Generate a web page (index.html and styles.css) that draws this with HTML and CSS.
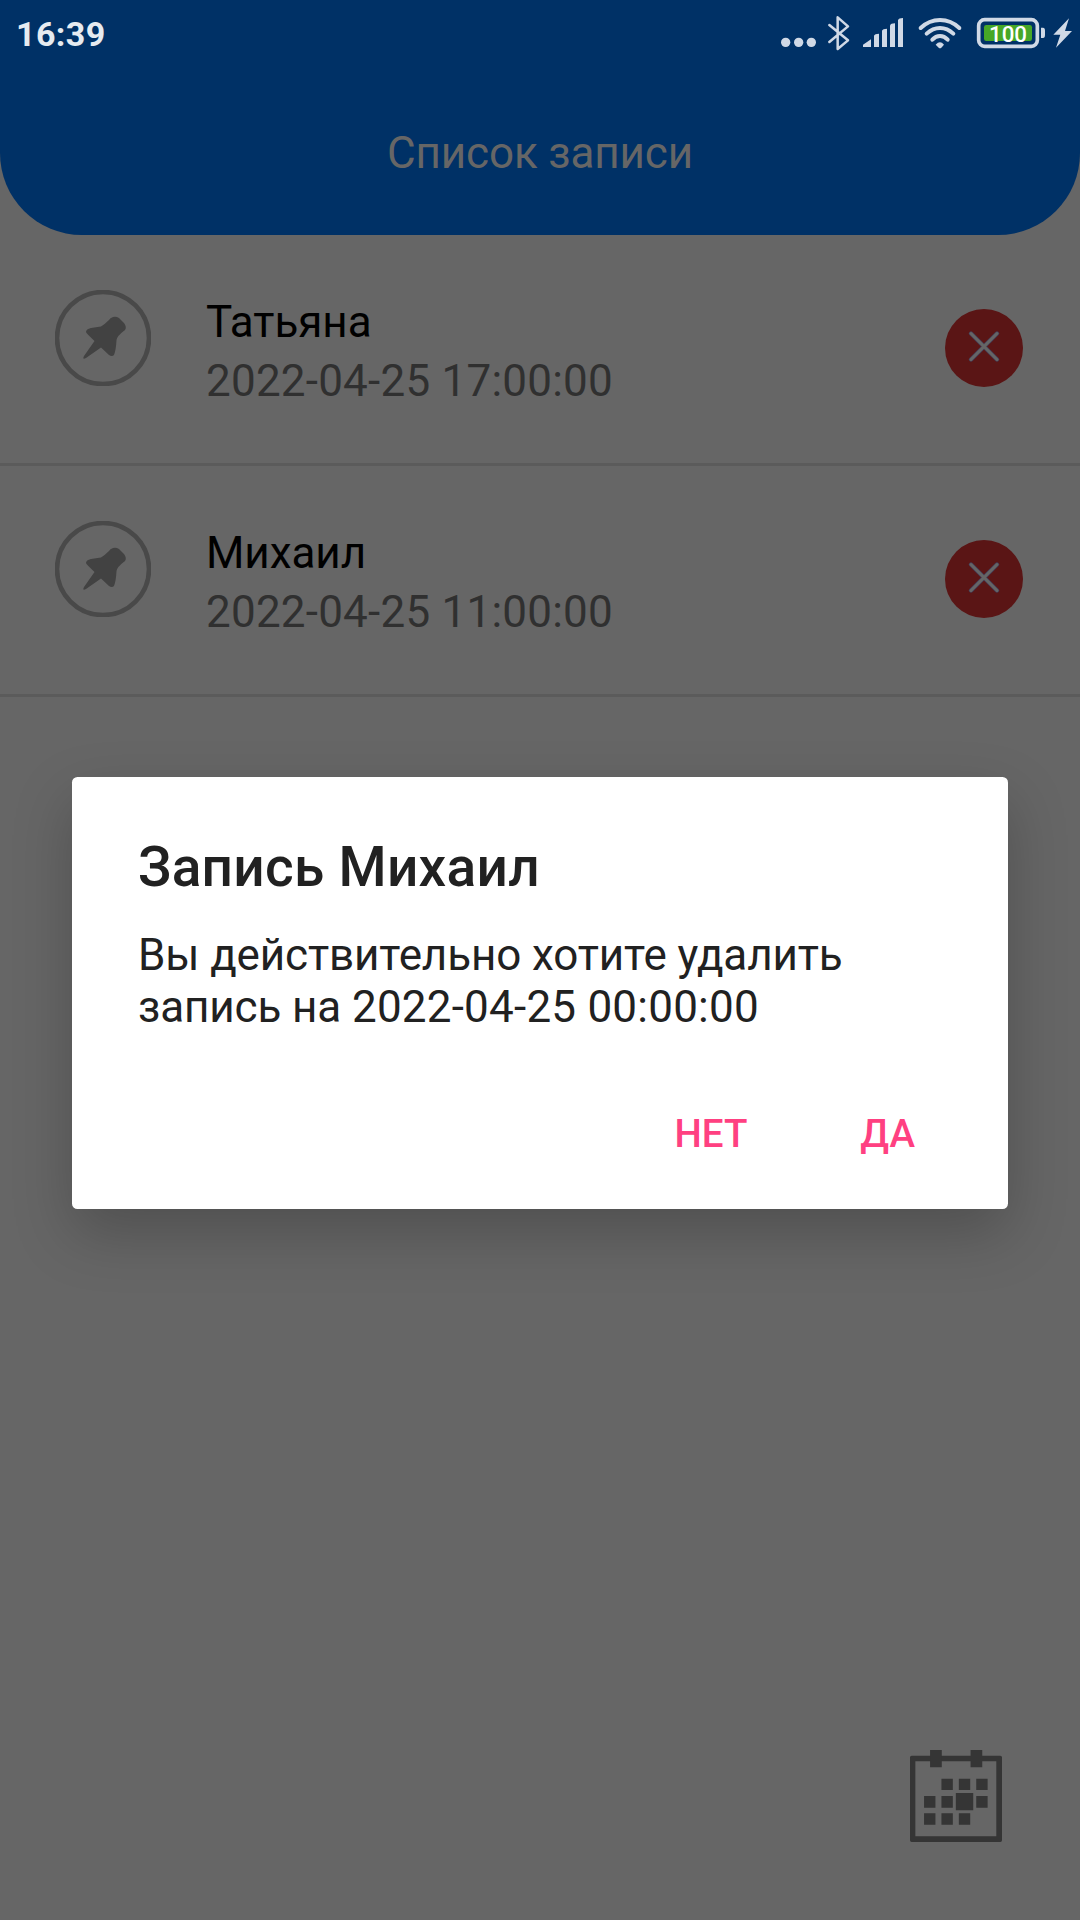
FILE: index.html
```html
<!DOCTYPE html>
<html lang="ru">
<head>
<meta charset="utf-8">
<title>Список записи</title>
<link rel="stylesheet" href="styles.css">
</head>
<body>
<div class="screen">
  <header class="header">
    <div class="status">
      <span class="clock">16:39</span>
      <svg class="status-icons" width="320" height="80" viewBox="0 0 960 240" fill="#d0d9e6">
        <circle cx="77" cy="127" r="14"/><circle cx="116" cy="127" r="14"/><circle cx="154" cy="127" r="14"/>
        <path d="M208 75L264 121L233 147V52L264 79L208 126" fill="none" stroke="#d0d9e6" stroke-width="7.500" stroke-linejoin="round" stroke-linecap="round"/>
        <path d="M309 141V134L333 118V141ZM342 141V107Q344 101 357 101V141ZM366 141V92Q368 86 381 86V141ZM390 141V77Q392 70 405 70V141ZM414 141V61Q416 54 429 54V141Z"/>
        <g fill="none" stroke="#d0d9e6" stroke-width="12" stroke-linecap="round">
          <path d="M482 84Q507 60 540 60T598 84"/><path d="M500 101Q518 84 540 84T580 101"/><path d="M517 119Q527 108 540 108T563 119"/>
        </g>
        <path d="M527 134Q540 120 552 134L544 143Q540 146 536 143Z"/>
        <rect x="656" y="59" width="176" height="80" rx="18" fill="none" stroke="#d0d9e6" stroke-width="11"/>
        <rect x="672" y="75" width="144" height="48" rx="7" fill="#47a727"/>
        <path d="M843 83H849Q855 83 855 92V105Q855 114 849 114H843Z"/>
        <path d="M927 55L880 104H901L888 143L936 93H915Z"/>
        <text class="charge" x="744" y="125" text-anchor="middle">100</text>
      </svg>
    </div>
    <h1 class="title">Список записи</h1>
  </header>

  <main class="list">
    <article class="row">
      <svg class="pin" width="96" height="96" viewBox="0 0 96 96">
        <circle cx="48" cy="48" r="46" fill="none" stroke="#494949" stroke-width="4.600"/>
        <path d="M58 27Q61 26 64 28L69 33Q72 37 70 40Q62 46 61.500 50Q61 60 59 65Q57 67 54 65L46 57.500L31 68Q27 70 29 66L39.500 51Q31 43 31 42Q31 39 36 38L46 36.500Q50 34 54 30Q55 28 58 27Z" fill="#424242"/>
      </svg>
      <div class="info">
        <div class="name">Татьяна</div>
        <div class="date">2022-04-25 17:00:00</div>
      </div>
      <button class="delete" aria-label="Удалить">
        <svg width="78" height="78" viewBox="0 0 78 78">
          <path class="edge" d="M26 24.500L52 50.500M52 24.500L26 50.500"/>
          <path d="M26 24.500L52 50.500M52 24.500L26 50.500"/>
        </svg>
      </button>
    </article>
    <article class="row">
      <svg class="pin" width="96" height="96" viewBox="0 0 96 96">
        <circle cx="48" cy="48" r="46" fill="none" stroke="#494949" stroke-width="4.600"/>
        <path d="M58 27Q61 26 64 28L69 33Q72 37 70 40Q62 46 61.500 50Q61 60 59 65Q57 67 54 65L46 57.500L31 68Q27 70 29 66L39.500 51Q31 43 31 42Q31 39 36 38L46 36.500Q50 34 54 30Q55 28 58 27Z" fill="#424242"/>
      </svg>
      <div class="info">
        <div class="name">Михаил</div>
        <div class="date">2022-04-25 11:00:00</div>
      </div>
      <button class="delete" aria-label="Удалить">
        <svg width="78" height="78" viewBox="0 0 78 78">
          <path class="edge" d="M26 24.500L52 50.500M52 24.500L26 50.500"/>
          <path d="M26 24.500L52 50.500M52 24.500L26 50.500"/>
        </svg>
      </button>
    </article>
  </main>

  <svg class="calendar" width="92" height="92" viewBox="91 90 275 276" preserveAspectRatio="none" fill="#353535">
    <path fill-rule="evenodd" d="M96 107H361Q366 107 366 112V361Q366 366 361 366H96Q91 366 91 361V112Q91 107 96 107ZM107 124V349H349V124Z"/>
    <path d="M151 90h35v52h-35zM272 90h35v52h-35zM185 176h34v34h-34zM237 176h34v34h-34zM289 176h34v34h-34zM133 228h34v35h-34zM185 228h34v35h-34zM228 219h52v52h-52zM289 228h34v35h-34zM133 280h34v34h-34zM185 280h34v34h-34zM237 280h34v34h-34z"/>
  </svg>

  <div class="overlay">
    <section class="dialog" role="dialog">
      <h2 class="dialog-title">Запись Михаил</h2>
      <p class="message">Вы действительно хотите удалить<br>запись на <span class="when">2022-04-25 00:00:00</span></p>
      <div class="actions">
        <button class="action">НЕТ</button>
        <button class="action">ДА</button>
      </div>
    </section>
  </div>
</div>
</body>
</html>
```
FILE: styles.css
```css
* { box-sizing: border-box; }

body {
  margin: 0;
  font-family: Roboto, "Noto Sans", sans-serif;
  background: #666;
}

.screen {
  position: relative;
  width: 1080px;
  height: 1920px;
  overflow: hidden;
  background: #666;
}

.header {
  height: 235px;
  background: #003166;
  border-radius: 0 0 82px 82px;
}

.status {
  display: flex;
  justify-content: space-between;
  height: 80px;
  padding-left: 16px;
}

.clock {
  padding-top: 14px;
  font-size: 34px;
  line-height: 40px;
  font-weight: 700;
  letter-spacing: 0.4px;
  color: #e6ebf0;
}

.charge {
  font-size: 67px;
  font-weight: 500;
  fill: #fff;
}

.title {
  margin: 0;
  padding-top: 47px;
  font-size: 44px;
  line-height: 52px;
  font-weight: 400;
  letter-spacing: -0.15px;
  text-align: center;
  color: #666;
}

.row {
  display: flex;
  align-items: flex-start;
  height: 231px;
  padding: 55px 57px 0 55px;
  border-bottom: 3px solid #5b5b5b;
}

.info {
  flex: 1;
  padding: 6px 0 0 55px;
  font-size: 44px;
}

.name {
  line-height: 52px;
  letter-spacing: -0.05px;
  color: #000;
}

.date {
  margin-top: 7px;
  line-height: 52px;
  letter-spacing: 0.22px;
  color: #303030;
}

.delete {
  width: 78px;
  height: 78px;
  margin-top: 19px;
  padding: 0;
  border: 0;
  border-radius: 50%;
  background: #5a1515;
}

.delete svg {
  display: block;
  fill: none;
  stroke: #666;
  stroke-width: 3;
  stroke-linecap: round;
}

.delete .edge {
  stroke: #45405a;
  stroke-width: 4.4;
}

.calendar {
  position: absolute;
  right: 78px;
  bottom: 78px;
}

.overlay {
  position: absolute;
  inset: 0;
  padding: 777px 72px 0;
}

.dialog {
  height: 432px;
  padding: 58px 66px 0;
  background: #fff;
  border-radius: 5.5px;
  box-shadow: 0 24px 60px rgba(0, 0, 0, 0.22);
}

.dialog-title {
  margin: 0;
  font-size: 55px;
  line-height: 64px;
  font-weight: 500;
  letter-spacing: 0.28px;
  color: #212121;
}

.message {
  margin: 30px 0 0;
  font-size: 44px;
  line-height: 52px;
  letter-spacing: -0.12px;
  color: #212121;
}

.when {
  letter-spacing: 0.22px;
}

.actions {
  display: flex;
  justify-content: flex-end;
  gap: 69px;
  margin-top: 42px;
  padding-right: 5px;
}

.action {
  padding: 36px 22px;
  border: 0;
  background: none;
  font: 500 38.5px/45px Roboto, sans-serif;
  color: #ff4081;
}
```
